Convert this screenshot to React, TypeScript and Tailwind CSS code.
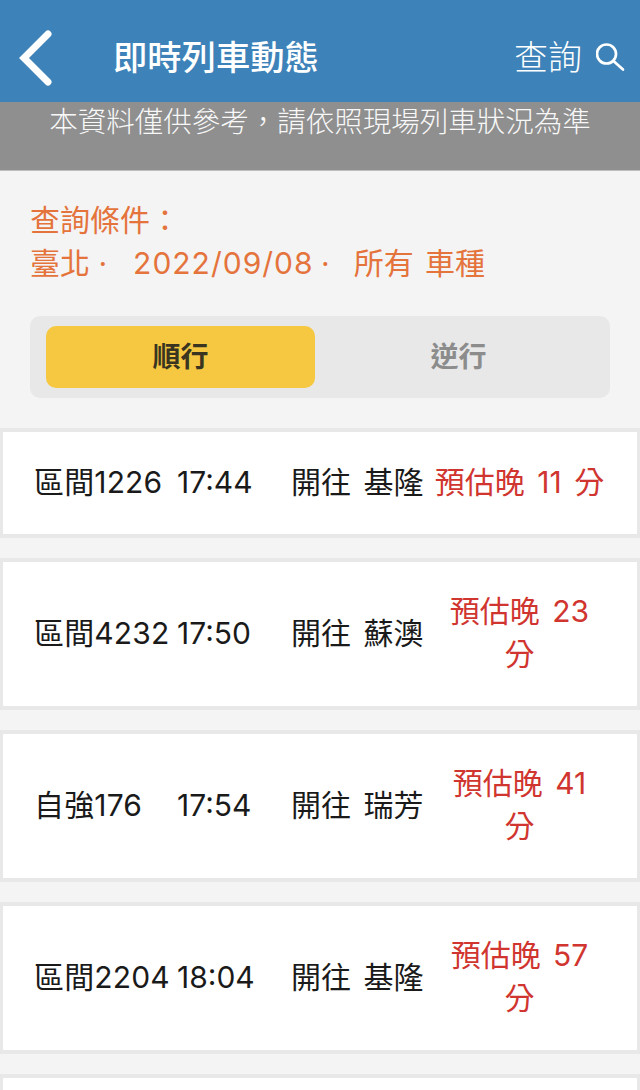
import React from "react";

const trains = [
  { name: "區間1226", time: "17:44", dest: "基隆", late: "預估晚 11 分", tall: false },
  { name: "區間4232", time: "17:50", dest: "蘇澳", late: "預估晚 23 分", tall: true },
  { name: "自強176", time: "17:54", dest: "瑞芳", late: "預估晚 41 分", tall: true },
  { name: "區間2204", time: "18:04", dest: "基隆", late: "預估晚 57 分", tall: true },
  { name: "", time: "", dest: "", late: "", tall: true },
];

const App = () => {
  return (
    <div className="h-[1090px] overflow-hidden bg-[#f4f4f4] font-['Inter','Noto_Sans_CJK_TC',sans-serif]">
      <header className="flex h-[102px] items-center bg-[#3d82b8] pt-[14px] text-white">
        <svg width="34" height="58" viewBox="0 0 34 58" className="ml-[19px] shrink-0">
          <path d="M29 5 L5 29 L29 53" fill="none" stroke="#fff" strokeWidth="7" strokeLinecap="round" />
        </svg>
        <div className="ml-[60px] flex-1 text-[34.3px] leading-none font-medium">即時列車動態</div>
        <div className="text-[34px] leading-none font-light">查詢</div>
        <svg width="30" height="30" viewBox="0 0 30 30" className="ml-[14px] mr-[14px] shrink-0">
          <circle cx="10.5" cy="11" r="9.5" fill="none" stroke="#fff" strokeWidth="2.7" />
          <path d="M17.5 18 L27 26.5" stroke="#fff" strokeWidth="2.7" strokeLinecap="round" />
        </svg>
      </header>

      <div className="h-[69px] border-b border-[#bdbdbd] bg-[#8f8f8f] text-center text-[28.5px] leading-[40px] font-light whitespace-nowrap text-[#f8f8f8]">
        本資料僅供參考，請依照現場列車狀況為準
      </div>

      <section className="px-[30px] pt-[28px] pb-[30px]">
        <div className="text-[30px] leading-[43px] text-[#e4733c]">
          <div>查詢條件：</div>
          <div className="flex whitespace-pre">
            <span>臺北 ·</span>
            <span className="ml-[26px] tracking-[1px]">2022/09/08</span>
            <span className="ml-[-1px]"> ·</span>
            <span className="ml-[24px] [word-spacing:3px]">所有 車種</span>
          </div>
        </div>
        <div className="mt-[31px] flex h-[82px] rounded-[10px] bg-[#e8e8e8] py-[10px] pl-[16px]">
          <div className="flex w-[269px] items-center justify-center rounded-[10px] bg-[#f6c842] text-[28px] font-bold text-[#3a3520]">
            順行
          </div>
          <div className="flex flex-1 items-center justify-center pr-[8px] text-[28px] font-bold text-[#8c8c8c]">
            逆行
          </div>
        </div>
      </section>

      <div className="flex flex-col gap-[20px]">
        {trains.map((t, i) => (
          <div
            key={i}
            className={`flex items-center border-x-[3px] border-y-[4px] border-[#e8e8e8] bg-white pb-[2px] text-[30px] leading-[43px] text-[#1a1a1a] [word-spacing:4px] ${t.tall ? "h-[152px]" : "h-[110px]"}`}
          >
            <div className="ml-[31px] w-[143px] tracking-[0.15px] whitespace-nowrap">{t.name}</div>
            <div className="w-[114px]">{t.time}</div>
            <div className="w-[141px] whitespace-nowrap">{t.dest && `開往 ${t.dest}`}</div>
            <div className="w-[175px] text-center text-[#d0352f]">{t.late}</div>
          </div>
        ))}
      </div>
    </div>
  );
};

export default App;
